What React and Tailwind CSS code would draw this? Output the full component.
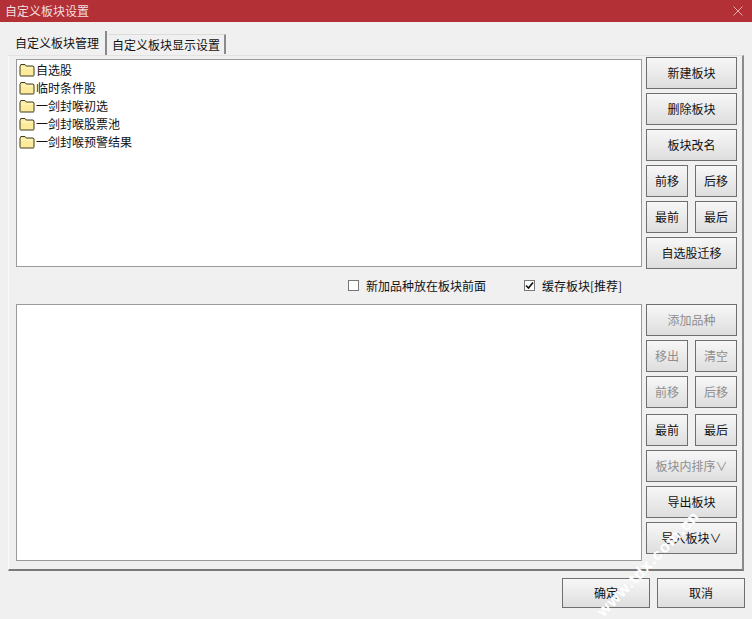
import React from "react";

const font = { fontFamily: '"Noto Sans CJK SC", "Liberation Sans", sans-serif' };

function Btn({ children, w = "w-[91px]", h = "h-[32px]", dim }) {
  return (
    <div
      className={`${w} ${h} shrink-0 flex items-center justify-center border border-[#6f6f6f] bg-gradient-to-b from-[#f7f7f7] to-[#dedede] text-[12px] ${dim ? "text-[#8e8e8e]" : "text-[#111]"}`}
    >
      {children}
    </div>
  );
}

function Pair({ a, b, dim }) {
  return (
    <div className="flex justify-between w-[91px]">
      <Btn w="w-[42px]" dim={dim}>{a}</Btn>
      <Btn w="w-[42px]" dim={dim}>{b}</Btn>
    </div>
  );
}

function Folder() {
  return (
    <svg width="16" height="14" viewBox="0 0 16 14" className="shrink-0">
      <path d="M1 3.5 L1.8 1.5 H6 L7.2 3 H14.2 L15 4 V12.5 L14.4 13 H1.6 L1 12.5 Z" fill="#fdeb9c" stroke="#3d3a20" strokeWidth="1" />
      <path d="M2 5 H14" stroke="#fff8d0" strokeWidth="1" />
    </svg>
  );
}

const items = ["自选股", "临时条件股", "一剑封喉初选", "一剑封喉股票池", "一剑封喉预警结果"];

export default function App() {
  return (
    <div style={font} className="relative w-[752px] h-[619px] overflow-hidden bg-[#f0f0f0] flex flex-col text-[12px] text-[#111]">
      <div className="h-[22px] shrink-0 bg-[#b23036] flex items-center justify-between pl-[5px] pr-[9px] text-[#f3dfdf]">
        <span>自定义板块设置</span>
        <svg width="10" height="10" viewBox="0 0 10 10"><path d="M0.5 0.5 L9.5 9.5 M9.5 0.5 L0.5 9.5" stroke="#e8a9ab" strokeWidth="1" /></svg>
      </div>

      <div className="flex items-end h-[33px] shrink-0 pl-[9px]">
        <div className="h-[24px] w-[98px] flex items-center justify-center bg-[#f0f0f0] border-r-2 border-[#8a8a8a]">自定义板块管理</div>
        <div className="h-[20px] w-[118px] ml-[1px] flex items-center justify-center border-r-2 border-t border-[#8a8a8a] border-t-[#dcdcdc] mb-[1px]">自定义板块显示设置</div>
      </div>

      <div className="ml-[8px] w-[736px] h-[516px] shrink-0 border-t border-t-[#e2e2e2] border-l border-l-[#fafafa] border-r-2 border-r-[#8a8a8a] border-b-2 border-b-[#7a7a7a] pl-[7px] pt-[3px] flex gap-[4px]">
        <div className="flex flex-col w-[626px]">
          <div className="h-[208px] bg-white border border-[#9a9a9a] pt-[1px] pl-[2px]">
            {items.map((t) => (
              <div key={t} className="h-[18px] flex items-center gap-[1px]">
                <Folder />
                <span>{t}</span>
              </div>
            ))}
          </div>
          <div className="h-[37px] flex items-center pl-[332px]">
            <div className="w-[11px] h-[11px] border border-[#777] bg-white" />
            <span className="ml-[7px] w-[158px]">新加品种放在板块前面</span>
            <div className="w-[11px] h-[11px] border border-[#777] bg-white flex items-center justify-center">
              <svg width="9" height="9" viewBox="0 0 9 9"><path d="M1 4.5 L3.5 7 L8 1.5" fill="none" stroke="#111" strokeWidth="1.6" /></svg>
            </div>
            <span className="ml-[7px]">缓存板块[推荐]</span>
          </div>
          <div className="h-[257px] bg-white border border-[#9a9a9a]" />
        </div>

        <div className="w-[91px] flex flex-col -mt-[2px]">
          <div className="flex flex-col gap-[4px] h-[247px]">
            <Btn>新建板块</Btn>
            <Btn>删除板块</Btn>
            <Btn>板块改名</Btn>
            <Pair a="前移" b="后移" />
            <Pair a="最前" b="最后" />
            <Btn>自选股迁移</Btn>
          </div>
          <div className="flex flex-col gap-[4px] mt-[-1px]" style={{ marginTop: 0 }}>
            <Btn dim>添加品种</Btn>
            <Pair a="移出" b="清空" dim />
            <Pair a="前移" b="后移" dim />
            <div className="mt-[2px]"><Pair a="最前" b="最后" /></div>
            <Btn dim>板块内排序∨</Btn>
            <Btn>导出板块</Btn>
            <Btn>导入板块∨</Btn>
          </div>
        </div>
      </div>

      <div className="flex justify-end gap-[7px] pr-[7px] pt-[7px]">
        <Btn w="w-[88px]" h="h-[30px]">确定</Btn>
        <Btn w="w-[88px]" h="h-[30px]">取消</Btn>
      </div>

      <div className="absolute left-[600px] top-[602px] origin-left -rotate-[46deg] text-white text-[16px] font-bold whitespace-nowrap tracking-[1px]" style={{ fontFamily: '"Liberation Sans", sans-serif' }}>
        www.tdx.com.cn
      </div>
    </div>
  );
}
